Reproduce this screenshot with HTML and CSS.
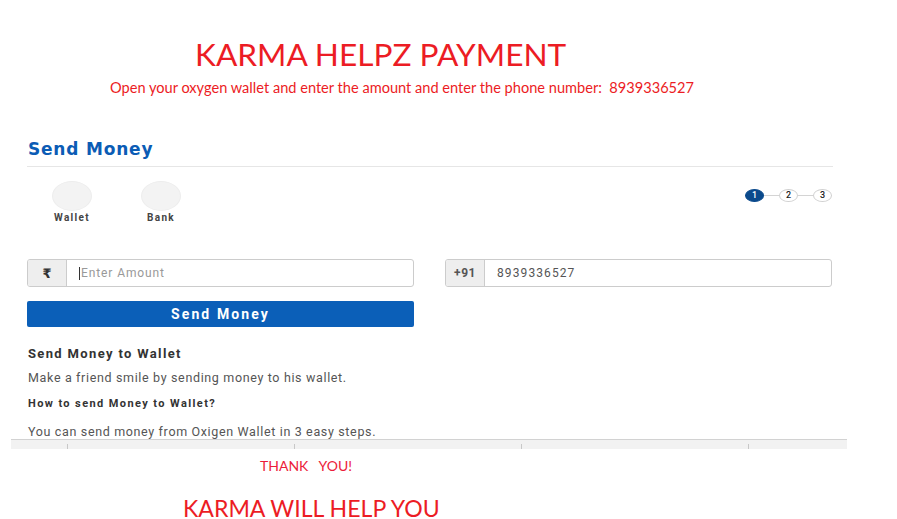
FILE: index.html
```html
<!DOCTYPE html>
<html>
<head>
<meta charset="utf-8">
<link rel="stylesheet" href="styles.css">
</head>
<body>
<header class="banner">
  <h1 class="banner-title">KARMA HELPZ PAYMENT</h1>
  <p class="banner-sub">Open your oxygen wallet and enter the amount and enter the phone number:&nbsp; 8939336527</p>
</header>

<section class="panel">
  <div class="panel-body">
    <h2 class="panel-title">Send Money</h2>
    <div class="mode-row">
      <div class="modes">
        <div class="mode"><span class="mode-icon"></span><span class="mode-label">Wallet</span></div>
        <div class="mode"><span class="mode-icon"></span><span class="mode-label">Bank</span></div>
      </div>
      <div class="steps">
        <span class="step step-active">1</span>
        <span class="step-line"></span>
        <span class="step">2</span>
        <span class="step-line"></span>
        <span class="step">3</span>
      </div>
    </div>
    <div class="form-row">
      <div class="form-col">
        <div class="input-group">
          <span class="addon addon-rupee">₹</span>
          <span class="field field-placeholder"><span class="caret"></span>Enter Amount</span>
        </div>
        <button class="btn-send">Send Money</button>
      </div>
      <div class="form-col">
        <div class="input-group">
          <span class="addon addon-code">+91</span>
          <span class="field field-value">8939336527</span>
        </div>
      </div>
    </div>
    <div class="info">
      <h3 class="info-title">Send Money to Wallet</h3>
      <p class="info-text">Make a friend smile by sending money to his wallet.</p>
      <h4 class="info-sub">How to send Money to Wallet?</h4>
      <p class="info-text info-last">You can send money from Oxigen Wallet in 3 easy steps.</p>
    </div>
  </div>
  <div class="scrollbar">
    <span class="tick"></span><span class="tick"></span><span class="tick"></span><span class="tick"></span>
  </div>
</section>

<footer class="closing">
  <p class="thanks">THANK &nbsp; YOU!</p>
  <p class="karma">KARMA WILL HELP YOU</p>
</footer>
</body>
</html>
```

FILE: styles.css
```css
* { box-sizing: border-box; }
html, body { margin: 0; padding: 0; background: #fff; }
body { width: 897px; height: 519px; overflow: hidden; }

.banner { padding-top: 36px; color: #ec1c24; font-family: Lato, "Open Sans", sans-serif; }
.banner-title { margin: 0 0 0 195px; font-weight: 400; font-size: 31.6px; line-height: 36px; }
.banner-sub { margin: 7px 0 0 110px; font-size: 14.6px; line-height: 18px; }

.panel { margin-top: 41px; padding-left: 11px; width: 847px; }
.panel-body { height: 301px; overflow: hidden; padding: 0 14px 0 16px; font-family: Roboto, "Open Sans", sans-serif; }
.panel-title { margin: 0; padding: 0 1px 6px; border-bottom: 1px solid #e6e6e6; color: #0b5cb5; font-family: "DejaVu Sans", Roboto, sans-serif; font-size: 17px; line-height: 22px; font-weight: 700; letter-spacing: 0.8px; }

.mode-row { display: flex; justify-content: space-between; align-items: flex-start; padding-top: 14px; height: 92px; }
.modes { display: flex; gap: 49px; padding-left: 25px; }
.mode { display: flex; flex-direction: column; align-items: center; width: 40px; }
.mode-icon { width: 40px; height: 30px; border-radius: 50%; background: #f3f3f3; border: 1px solid #ededed; }
.mode-label { margin-top: 1px; font-size: 10px; font-weight: 700; color: #444; letter-spacing: 1.3px; white-space: nowrap; }

.steps { display: flex; align-items: center; margin-top: 8px; padding-right: 1px; }
.step { width: 19px; height: 13px; border-radius: 50%; border: 1px solid #d0d0d0; background: #fff; font-size: 9px; line-height: 11px; text-align: center; color: #222; font-weight: 500; }
.step-active { background: #0b4a8c; border-color: #0b4a8c; color: #fff; }
.step-line { width: 15px; height: 1px; background: #d4d4d4; }

.form-row { display: flex; gap: 31px; }
.form-col { width: 387px; display: flex; flex-direction: column; gap: 14px; }
.input-group { display: flex; height: 28px; border: 1px solid #ccc; border-radius: 3px; overflow: hidden; }
.addon { width: 39px; flex: none; background: #eee; border-right: 1px solid #ccc; display: flex; align-items: center; justify-content: center; font-size: 12px; color: #444; font-weight: 700; }
.addon-rupee { font-family: "DejaVu Sans", sans-serif; font-size: 13px; color: #333; }
.addon-code { color: #555; letter-spacing: 0.5px; }
.field { flex: 1; display: flex; align-items: center; padding-left: 12px; font-size: 12px; }
.field-placeholder { color: #999; letter-spacing: 0.9px; }
.field-value { color: #555; letter-spacing: 1.1px; }
.caret { width: 1px; height: 13px; background: #333; margin-right: 1px; }

.btn-send { height: 26px; border: 0; border-radius: 2px; background: #0b5fb8; color: #fff; font-family: Roboto, sans-serif; font-size: 14px; font-weight: 700; letter-spacing: 2.1px; padding: 0; }

.info { padding-top: 19px; padding-left: 1px; }
.info-title { margin: 0; font-size: 13px; line-height: 16px; font-weight: 700; color: #333; letter-spacing: 1.35px; }
.info-sub { margin: 0; font-size: 11px; line-height: 16px; font-weight: 700; color: #333; letter-spacing: 1.4px; }
.info-text { margin: 8px 0 10px; font-size: 12.5px; line-height: 16px; color: #555; letter-spacing: 0.65px; }
.info-last { margin-top: 12px; }

.scrollbar { height: 10px; border-top: 1px solid #d2d2d2; background: #f2f2f2; display: flex; align-items: flex-end; padding-left: 56px; gap: 226px; }
.tick { width: 1px; height: 5px; background: #c8c8c8; }

.closing { color: #ec1c3a; font-family: Lato, "Open Sans", sans-serif; }
.thanks { margin: 8px 0 0 260px; font-size: 14px; line-height: 18px; }
.karma { margin: 22px 0 0 183px; font-size: 23.1px; line-height: 22px; color: #ec1c24; }
```
